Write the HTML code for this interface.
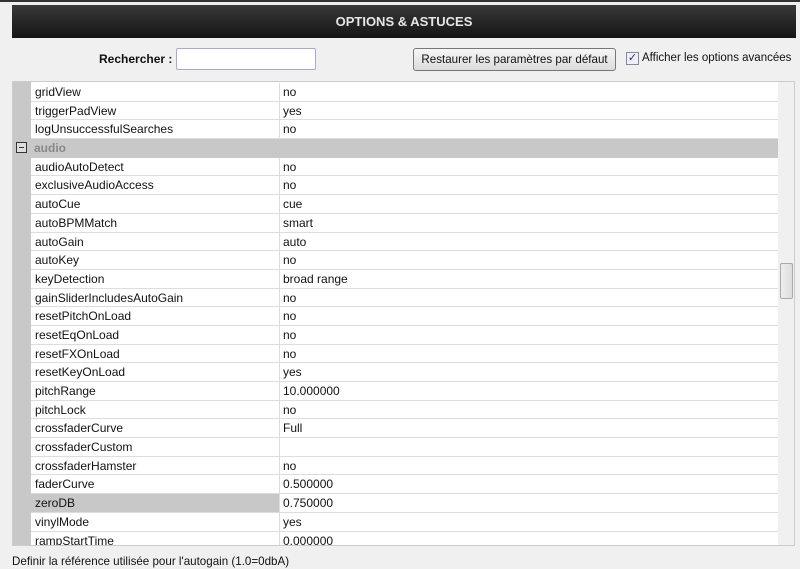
<!DOCTYPE html>
<html><head><style>
*{margin:0;padding:0;box-sizing:border-box}
body{width:800px;height:569px;background:#f0f0f0;font-family:"Liberation Sans",sans-serif;font-size:12px;color:#111;position:relative;overflow:hidden}
.top{position:absolute;left:0;top:0;width:800px;height:2px;background:#333}
.title{position:absolute;left:12px;top:5px;width:784px;height:33px;background:linear-gradient(#3a3a3a,#262626 50%,#151515);color:#e6e6e6;font-weight:bold;font-size:13px;text-align:center;line-height:33px}
.lbl{position:absolute;left:99px;top:52px;font-weight:bold;font-size:12px}
.inp{position:absolute;left:176px;top:48px;width:140px;height:22px;background:#fff;border:1px solid #aac;border-radius:2px}
.btn{position:absolute;left:413px;top:48px;width:203px;height:23px;border:1px solid #777;border-radius:3px;background:linear-gradient(#f6f6f6,#dcdcdc);text-align:center;line-height:21px;font-size:11.6px}
.cb{position:absolute;left:626px;top:52px;width:13px;height:13px;border:1px solid #889;background:#eef;font-size:11px;line-height:11px;text-align:center;color:#335}
.cbl{position:absolute;left:642px;top:52px;font-size:11.5px}
.tbl{position:absolute;left:12px;top:81px;width:783px;height:465px;border:1px solid #ccc;background:#fff;overflow:hidden}
.gut{position:absolute;left:0;top:0;width:18px;height:465px;background:#c8c8c8}
.rows{position:absolute;left:0;top:1px;width:765px}
.r{height:18.7px;position:relative;margin-left:18px;border-bottom:1px solid #ddd}
.r span{position:absolute;top:2px}
.n{left:4px}.v{left:252px}
.r:after{content:"";position:absolute;left:248px;top:0;bottom:0;border-left:1px solid #ddd}
.h{background:#c8c8c8;color:#888;font-weight:bold;margin-left:0;border-bottom:1px solid #c8c8c8}
.h:after{display:none}
.h .n{left:21px}
.z .bg{position:absolute;left:0;top:0;width:248px;height:100%;background:#c8c8c8}
.sb{position:absolute;left:765px;top:0;width:17px;height:465px;background:#f0f0f0}
.th{position:absolute;left:2px;top:181px;width:13px;height:36px;border:1px solid #aaa;border-radius:2px;background:linear-gradient(90deg,#eee,#ddd)}
.status{position:absolute;left:12px;top:555px;font-size:11.6px}
.mb{position:absolute;left:3px;top:3px;width:11px;height:11px;border:1px solid #333;background:#ddd}
.mb:after{content:"";position:absolute;left:2px;top:4px;width:5px;height:1px;background:#333}
</style></head><body>
<div class="top"></div>
<div class="title">OPTIONS &amp; ASTUCES</div>
<div class="lbl">Rechercher :</div>
<div class="inp"></div>
<div class="btn">Restaurer les paramètres par défaut</div>
<div class="cb">✓</div>
<div class="cbl">Afficher les options avancées</div>
<div class="tbl">
<div class="gut"></div>
<div class="rows">
<div class="r"><span class="n">gridView</span><span class="v">no</span></div>
<div class="r"><span class="n">triggerPadView</span><span class="v">yes</span></div>
<div class="r"><span class="n">logUnsuccessfulSearches</span><span class="v">no</span></div>
<div class="r h"><div class="mb"></div><span class="n">audio</span></div>
<div class="r"><span class="n">audioAutoDetect</span><span class="v">no</span></div>
<div class="r"><span class="n">exclusiveAudioAccess</span><span class="v">no</span></div>
<div class="r"><span class="n">autoCue</span><span class="v">cue</span></div>
<div class="r"><span class="n">autoBPMMatch</span><span class="v">smart</span></div>
<div class="r"><span class="n">autoGain</span><span class="v">auto</span></div>
<div class="r"><span class="n">autoKey</span><span class="v">no</span></div>
<div class="r"><span class="n">keyDetection</span><span class="v">broad range</span></div>
<div class="r"><span class="n">gainSliderIncludesAutoGain</span><span class="v">no</span></div>
<div class="r"><span class="n">resetPitchOnLoad</span><span class="v">no</span></div>
<div class="r"><span class="n">resetEqOnLoad</span><span class="v">no</span></div>
<div class="r"><span class="n">resetFXOnLoad</span><span class="v">no</span></div>
<div class="r"><span class="n">resetKeyOnLoad</span><span class="v">yes</span></div>
<div class="r"><span class="n">pitchRange</span><span class="v">10.000000</span></div>
<div class="r"><span class="n">pitchLock</span><span class="v">no</span></div>
<div class="r"><span class="n">crossfaderCurve</span><span class="v">Full</span></div>
<div class="r"><span class="n">crossfaderCustom</span><span class="v"></span></div>
<div class="r"><span class="n">crossfaderHamster</span><span class="v">no</span></div>
<div class="r"><span class="n">faderCurve</span><span class="v">0.500000</span></div>
<div class="r z"><div class="bg"></div><span class="n">zeroDB</span><span class="v">0.750000</span></div>
<div class="r"><span class="n">vinylMode</span><span class="v">yes</span></div>
<div class="r"><span class="n">rampStartTime</span><span class="v">0.000000</span></div>
</div>
<div class="sb"><div class="th"></div></div>
</div>
<div class="status">Definir la référence utilisée pour l'autogain (1.0=0dbA)</div>
</body></html>
